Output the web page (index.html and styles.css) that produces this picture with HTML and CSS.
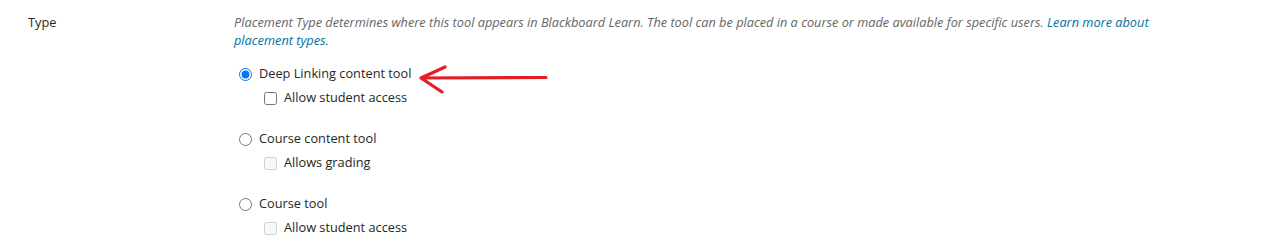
FILE: index.html
```html
<!DOCTYPE html>
<html lang="en">
<head>
    <meta charset="UTF-8">
    <title>Placement Type</title>
    <link rel="stylesheet" href="styles.css">
</head>
<body>
    <div class="field-row">
        <div class="field-label">Type</div>
        <div class="field-body">
            <p class="help-text">Placement Type determines where this tool appears in Blackboard Learn. The tool can be placed in a course or made available for specific users. <a href="#">Learn more about placement types.</a></p>

            <div class="option-group">
                <label class="radio-option">
                    <input type="radio" name="type" checked>
                    <span>Deep Linking content tool</span>
                    <svg class="arrow" width="134" height="42" viewBox="0 0 134 42">
                        <path d="M129 25.5 L4 26 M4 26 L28 15 M4 26 L25 40" fill="none" stroke="#e31d24" stroke-width="3.2" stroke-linecap="round" stroke-linejoin="round"/>
                    </svg>
                </label>
                <label class="check-option">
                    <input type="checkbox">
                    <span>Allow student access</span>
                </label>
            </div>

            <div class="option-group">
                <label class="radio-option">
                    <input type="radio" name="type">
                    <span>Course content tool</span>
                </label>
                <label class="check-option">
                    <input type="checkbox" disabled>
                    <span>Allows grading</span>
                </label>
            </div>

            <div class="option-group">
                <label class="radio-option">
                    <input type="radio" name="type">
                    <span>Course tool</span>
                </label>
                <label class="check-option">
                    <input type="checkbox" disabled>
                    <span>Allow student access</span>
                </label>
            </div>
        </div>
    </div>
</body>
</html>
```

FILE: styles.css
```css
body {
    margin: 0;
    padding: 0;
    background-color: #fff;
    font-family: "Open Sans", sans-serif;
    font-size: 12.75px;
    color: #262626;
}

.field-row {
    display: flex;
    padding-top: 13px;
}

.field-label {
    width: 206px;
    padding-left: 28px;
    line-height: 18px;
}

.field-body {
    flex: 1;
    padding-right: 100px;
}

.help-text {
    margin: 0;
    font-style: italic;
    color: #666;
    line-height: 18px;
}

.help-text a {
    color: #00729e;
    text-decoration: none;
}

.option-group {
    margin-top: 14px;
    margin-bottom: 21px;
}

.radio-option,
.check-option {
    display: flex;
    align-items: center;
    height: 20px;
}

.radio-option input {
    margin: 2px 7px 0 5px;
}

.check-option {
    margin-top: 4px;
    padding-left: 30px;
}

.check-option input {
    margin: 2px 7px 0 0;
}

.arrow {
    flex: none;
    margin-left: 6px;
}
```
